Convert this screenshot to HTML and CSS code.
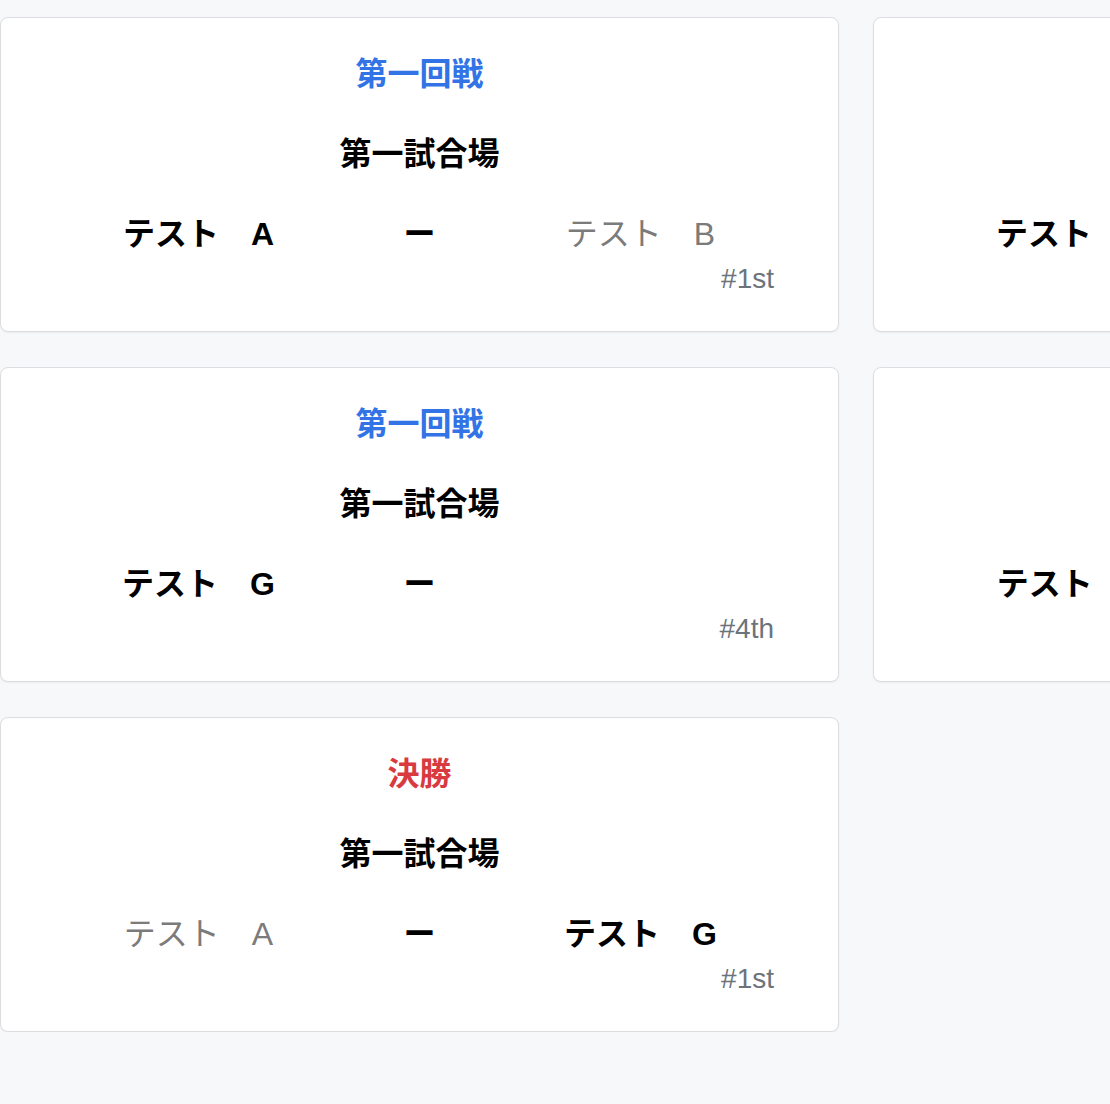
FILE: index.html
```html
<!DOCTYPE html>
<html lang="ja">
<head>
<meta charset="utf-8">
<link rel="stylesheet" href="styles.css">
</head>
<body>
<div class="grid">
  <div class="card">
    <div class="round round-blue">第一回戦</div>
    <div class="venue">第一試合場</div>
    <div class="teams">
      <div class="team win">テスト　A</div>
      <div class="dash">ー</div>
      <div class="team lose">テスト　B</div>
    </div>
    <div class="num">#1st</div>
  </div>
  <div class="card">
    <div class="round round-blue">第一回戦</div>
    <div class="venue">第二試合場</div>
    <div class="teams">
      <div class="team win">テスト　C</div>
      <div class="dash">ー</div>
      <div class="team lose">テスト　D</div>
    </div>
    <div class="num">#2nd</div>
  </div>
  <div class="card">
    <div class="round round-blue">第一回戦</div>
    <div class="venue">第一試合場</div>
    <div class="teams">
      <div class="team win">テスト　G</div>
      <div class="dash">ー</div>
      <div class="team lose"></div>
    </div>
    <div class="num">#4th</div>
  </div>
  <div class="card">
    <div class="round round-blue">第一回戦</div>
    <div class="venue">第二試合場</div>
    <div class="teams">
      <div class="team win">テスト　E</div>
      <div class="dash">ー</div>
      <div class="team lose">テスト　F</div>
    </div>
    <div class="num">#3rd</div>
  </div>
  <div class="card">
    <div class="round round-red">決勝</div>
    <div class="venue">第一試合場</div>
    <div class="teams">
      <div class="team lose">テスト　A</div>
      <div class="dash">ー</div>
      <div class="team win">テスト　G</div>
    </div>
    <div class="num">#1st</div>
  </div>
</div>
</body>
</html>
```
FILE: styles.css
```css
html, body {
  margin: 0;
  padding: 0;
  background: #f7f8fa;
  overflow: hidden;
  font-family: "Liberation Sans", "Noto Sans CJK JP", sans-serif;
  color: #000;
}
.grid {
  display: grid;
  grid-template-columns: 839px 839px;
  column-gap: 34px;
  row-gap: 35px;
  padding-top: 17px;
}
.card {
  background: #fff;
  border: 1px solid #dcdde0;
  border-radius: 8px;
  box-shadow: 0 1px 2px rgba(0,0,0,0.05);
  padding: 32px 0 30px;
  height: 315px;
  box-sizing: border-box;
  display: flex;
  flex-direction: column;
}
.round {
  font-size: 32px;
  line-height: 48px;
  font-weight: 700;
  text-align: center;
}
.round-blue { color: #3273e6; }
.round-red { color: #d83a3f; }
.venue {
  margin-top: 32px;
  font-size: 32px;
  line-height: 48px;
  font-weight: 700;
  text-align: center;
}
.teams {
  margin-top: 32px;
  padding: 0 87px;
  display: grid;
  grid-template-columns: 1fr 1fr 1fr;
  font-size: 32px;
  line-height: 48px;
}
.team, .dash {
  text-align: center;
  white-space: nowrap;
}
.dash { font-weight: 700; }
.win { font-weight: 700; color: #000; }
.lose { font-weight: 400; color: #7b7b7b; }
.num {
  text-align: right;
  padding-right: 64px;
  font-size: 28px;
  line-height: 42px;
  color: #6c737b;
}
```
